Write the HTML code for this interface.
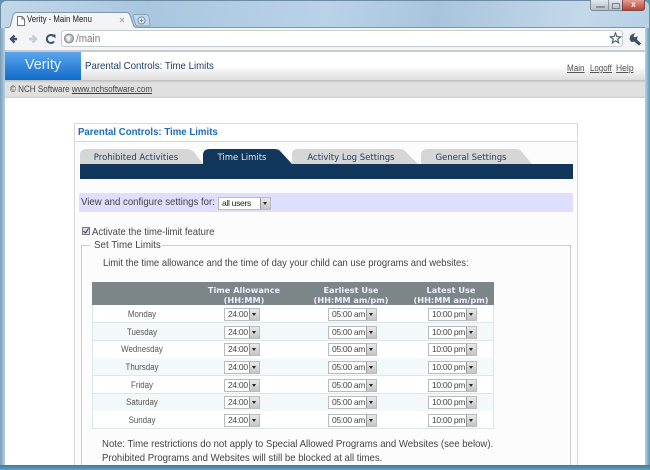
<!DOCTYPE html>
<html><head><meta charset="utf-8"><style>
html,body{margin:0;padding:0;width:650px;height:470px;overflow:hidden;background:#5f93b5}
*{box-sizing:border-box}
div,span,a{position:absolute;white-space:nowrap;font-family:"Liberation Sans",sans-serif}
.sel{height:13px;background:#fff;border:1px solid #bbb;font-size:8.5px;letter-spacing:-.3px;color:#444;line-height:11px;padding-left:3px}
.btn{position:absolute;top:0;right:0;width:10px;height:11px;background:linear-gradient(#e8e8e8,#c4c4c4);border-left:1px solid #999}
.btn:after{content:"";position:absolute;left:2px;top:4px;border:2px solid transparent;border-top:3px solid #222;border-bottom:0}
.a{width:36px;left:224px}.b{width:49px;left:328px}.c{width:49px;left:428px}
.day{left:92px;width:100px;text-align:center;font-size:9px;color:#555;line-height:13px;transform:scaleX(.88)}
.row{left:92px;width:402px;height:18px;border-bottom:1px solid #dce8e8;border-left:1px solid #dce8e8;border-right:1px solid #dce8e8}
.th{color:#eef;font:bold 8.2px "DejaVu Sans",sans-serif;text-align:center;line-height:10px}
.tab{top:149px;height:15px;font:8.5px "DejaVu Sans",sans-serif;color:#1e3f60;line-height:18px;text-align:center}
.x{transform-origin:0 50%}
</style></head><body>
<div style="left:0;top:0;width:650px;height:470px;background:linear-gradient(100deg,#c2d8e8 0%,#a9c6e0 20%,#bad2e8 45%,#a8c4dc 60%,#c4d8ea 80%,#a6c6de 100%);border:1px solid #6c8ca4;border-radius:6px 6px 0 0"></div>
<div style="left:0;top:28px;width:5px;height:442px;background:linear-gradient(90deg,#7a9cb8,#b4d0e4)"></div>
<div style="left:645px;top:28px;width:5px;height:442px;background:linear-gradient(270deg,#5e94b4,#b4d4e8)"></div>
<!-- window buttons -->
<div style="left:590px;top:0;width:33px;height:11px;background:linear-gradient(#e2e8ec,#b4bcc4);border:1px solid #7a8a96;border-top:0;border-radius:0 0 0 3px"></div>
<div style="left:596px;top:6px;width:9px;height:2px;background:#8a96a0"></div>
<div style="left:608px;top:0;width:1px;height:11px;background:#8a96a0"></div>
<div style="left:612px;top:3px;width:8px;height:6px;border:1px solid #78848e"></div>
<div style="left:622px;top:0;width:23px;height:11px;background:linear-gradient(#e0a090,#c04030);border:1px solid #7c4a44;border-top:0;border-radius:0 0 3px 0;color:#fff;font:bold 8px/9px 'Liberation Sans',sans-serif;text-align:center">x</div>
<!-- tab -->
<svg style="position:absolute;left:0;top:0" width="650" height="52"><path d="M5 28H8Q10 28 11 24L13 15Q14 12.500 17 12.500H126Q129 12.500 130 15L133 24Q134 28 137 28H645V52H5Z" fill="#f2f4f6"/><path d="M5 27.500H8Q10 27.500 11 24L13 15Q14 12.500 17 12.500H126Q129 12.500 130 15L133 24Q134 27.500 137 27.500H645" fill="none" stroke="#7c96ac"/><path d="M133 16Q133 14.500 135 14.500H146Q148 14.500 149 17L150 25Q150 26 149 26H138Q136 26 135.500 24Z" fill="#c0d6ea" stroke="#7c96ac" stroke-width=".7"/><circle cx="141.500" cy="20.500" r="3.500" fill="#f4f8fc" stroke="#6a8cb0"/><path d="M141.500 18.500v4M139.500 20.500h4" stroke="#6a8cb0"/>
<path d="M17.500 16.500h4.500l2.500 2.500v6.500h-7z" fill="#fff" stroke="#777"/><path d="M22 16.500v2.500h2.500" fill="none" stroke="#777"/>
<path d="M120 18l4 4M124 18l-4 4" stroke="#aaa" stroke-width="1.200"/>
<path d="M11 39h6M14.500 35.500L11 39l3.500 3.500" fill="none" stroke="#3c5270" stroke-width="2.400"/>
<path d="M29 39h7M32.500 35.500L36 39l-3.500 3.500" fill="none" stroke="#c4ccd4" stroke-width="2.400"/>
<path d="M54 36.500A4 4 0 1 0 54 41.500" fill="none" stroke="#3c5270" stroke-width="2"/><path d="M51.500 34.500h4v4z" fill="#3c5270"/>
<rect x="61.500" y="30.500" width="561" height="16" rx="3" fill="#fff" stroke="#c4ccd2"/>
<circle cx="69" cy="38.500" r="4.500" fill="#b4bcc4" stroke="#7c858e"/><path d="M66 37q3-3 5 0l-1 3-2 2z" fill="#eef1f3"/>
<path d="M615.500 33l1.400 3.600 3.800.2-3 2.400 1 3.700-3.200-2.100-3.200 2.100 1-3.700-3-2.400 3.800-.2z" fill="#fff" stroke="#4a5a68" stroke-width="1.100"/>
<path d="M631 35.500l3-1.500-1 2.500 1.500 1.500 2.500-1-.5 3 4 3.500-1.500 1.500-4.500-4-3 .5-1.500-2.500z" fill="#3c5068" stroke="#3c5068"/></svg>
<span class="x" style="left:27px;top:14px;font-size:9.500px;color:#222;line-height:12px;transform:scaleX(.82)">Verity - Main Menu</span>
<span class="x" style="left:76px;top:32px;font-size:11px;color:#777;line-height:14px;transform:scaleX(.9)">/main</span>
<!-- page -->
<div style="left:5px;top:52px;width:640px;height:413px;background:#fff"></div>
<div style="left:5px;top:50px;width:640px;height:2px;background:#c8ccd0"></div>
<div style="left:5px;top:52px;width:640px;height:28px;background:linear-gradient(#fff 50%,#dcdcdc)"></div>
<div style="left:5px;top:52px;width:76px;height:28px;background:linear-gradient(#5ca6ee,#0f6ac8);color:#e4f0fc;font-size:14.500px;line-height:27px;text-align:center">Verity</div>
<span class="x" style="left:85px;top:59px;font-size:10.500px;color:#1d3f66;line-height:14px;transform:scaleX(.92)">Parental Controls: Time Limits</span>
<a class="x" style="left:567px;top:62px;font-size:9px;color:#555;text-decoration:underline;line-height:12px;transform:scaleX(.9)">Main</a>
<a class="x" style="left:590px;top:62px;font-size:9px;color:#555;text-decoration:underline;line-height:12px;transform:scaleX(.88)">Logoff</a>
<a class="x" style="left:616px;top:62px;font-size:9px;color:#555;text-decoration:underline;line-height:12px;transform:scaleX(.95)">Help</a>
<div style="left:5px;top:80px;width:640px;height:18px;background:linear-gradient(#bbb,#e0e0e0 3px,#e0e0e0 16px,#ccc)"></div>
<span class="x" style="left:10px;top:83px;font-size:9px;color:#444;line-height:12px;transform:scaleX(.895)">© NCH Software <u>www.nchsoftware.com</u></span>
<!-- panel -->
<div style="left:74px;top:123px;width:504px;height:347px;background:#fcfcfc;border:1px solid #d8d8d8"></div>
<div style="left:75px;top:124px;width:502px;height:18px;background:#fff;border-bottom:1px solid #d8d8d8"></div>
<span class="x" style="left:78px;top:126px;font-size:10px;font-weight:bold;color:#1c6cb8;line-height:13px;transform:scaleX(.965)">Parental Controls: Time Limits</span>
<svg style="position:absolute;left:0;top:140px" width="650" height="30"><g fill="#d6d6d6"><path d="M80 24V15Q80 9 87 9H187Q191 9 194 12L203 24Z"/><path d="M292 24V15Q292 9 298 9H400Q404 9 406 12L418 24Z" /><path d="M421 24V15Q421 9 428 9H516Q520 9 522 12L532 24Z"/></g><path d="M203 24V15Q203 9 210 9H275Q279 9 281 12L292 24Z" fill="#12375c"/></svg>
<div class="tab" style="left:80px;width:112px">Prohibited Activities</div>
<div class="tab" style="left:203px;width:78px;color:#e0e8f0">Time Limits</div>
<div class="tab" style="left:295px;width:112px">Activity Log Settings</div>
<div class="tab" style="left:422px;width:98px">General Settings</div>
<div style="left:80px;top:164px;width:493px;height:15px;background:#12375c"></div>
<div style="left:79px;top:193px;width:494px;height:19px;background:#dedeff"></div>
<span class="x" style="left:81px;top:195px;font-size:10.500px;color:#444;line-height:14px;transform:scaleX(.915)">View and configure settings for:</span>
<div class="sel" style="left:218px;top:197px;width:53px;color:#222">all users<i class="btn"></i></div>
<div style="left:82px;top:227px;width:8px;height:8px;background:#dde;border:1px solid #778"></div>
<svg style="position:absolute;left:82px;top:227px" width="8" height="8"><path d="M1.500 4l2 2 3-4.500" fill="none" stroke="#333"/></svg>
<span class="x" style="left:92px;top:225px;font-size:10.500px;color:#444;line-height:14px;transform:scaleX(.904)">Activate the time-limit feature</span>
<div style="left:81px;top:245px;width:490px;height:225px;border:1px solid #ccc;border-bottom:0"></div>
<div style="left:90px;top:238px;width:72px;height:14px;background:#fcfcfc"></div>
<span class="x" style="left:94px;top:238px;font-size:10.500px;color:#444;line-height:14px;transform:scaleX(.93)">Set Time Limits</span>
<span class="x" style="left:103px;top:256px;font-size:10.500px;color:#444;line-height:14px;transform:scaleX(.9)">Limit the time allowance and the time of day your child can use programs and websites:</span>
<!-- table -->
<div style="left:92px;top:282px;width:402px;height:23px;background:#7a8688"></div>
<div class="th" style="left:190px;width:108px;top:285px">Time Allowance<br>(HH:MM)</div>
<div class="th" style="left:291px;width:120px;top:285px">Earliest Use<br>(HH:MM am/pm)</div>
<div class="th" style="left:391px;width:120px;top:285px">Latest Use<br>(HH:MM am/pm)</div>
<div class="row" style="top:305px;background:#fff"></div>
<div class="row" style="top:323px;background:#f3f9fa"></div>
<div class="row" style="top:341px;background:#fff"></div>
<div class="row" style="top:358px;background:#f3f9fa"></div>
<div class="row" style="top:376px;background:#fff"></div>
<div class="row" style="top:394px;background:#f3f9fa"></div>
<div class="row" style="top:411px;background:#fff"></div>
<div class="day" style="top:308px">Monday</div><div class="sel a" style="top:308px">24:00<i class="btn"></i></div><div class="sel b" style="top:308px">05:00 am<i class="btn"></i></div><div class="sel c" style="top:308px">10:00 pm<i class="btn"></i></div>
<div class="day" style="top:326px">Tuesday</div><div class="sel a" style="top:326px">24:00<i class="btn"></i></div><div class="sel b" style="top:326px">05:00 am<i class="btn"></i></div><div class="sel c" style="top:326px">10:00 pm<i class="btn"></i></div>
<div class="day" style="top:343px">Wednesday</div><div class="sel a" style="top:343px">24:00<i class="btn"></i></div><div class="sel b" style="top:343px">05:00 am<i class="btn"></i></div><div class="sel c" style="top:343px">10:00 pm<i class="btn"></i></div>
<div class="day" style="top:361px">Thursday</div><div class="sel a" style="top:361px">24:00<i class="btn"></i></div><div class="sel b" style="top:361px">05:00 am<i class="btn"></i></div><div class="sel c" style="top:361px">10:00 pm<i class="btn"></i></div>
<div class="day" style="top:379px">Friday</div><div class="sel a" style="top:379px">24:00<i class="btn"></i></div><div class="sel b" style="top:379px">05:00 am<i class="btn"></i></div><div class="sel c" style="top:379px">10:00 pm<i class="btn"></i></div>
<div class="day" style="top:396px">Saturday</div><div class="sel a" style="top:396px">24:00<i class="btn"></i></div><div class="sel b" style="top:396px">05:00 am<i class="btn"></i></div><div class="sel c" style="top:396px">10:00 pm<i class="btn"></i></div>
<div class="day" style="top:414px">Sunday</div><div class="sel a" style="top:414px">24:00<i class="btn"></i></div><div class="sel b" style="top:414px">05:00 am<i class="btn"></i></div><div class="sel c" style="top:414px">10:00 pm<i class="btn"></i></div>
<span class="x" style="left:102px;top:438px;font-size:10.300px;color:#444;line-height:14px;transform:scaleX(.933)">Note: Time restrictions do not apply to Special Allowed Programs and Websites (see below).</span>
<span class="x" style="left:102px;top:452px;font-size:10.300px;color:#444;line-height:14px;transform:scaleX(.93)">Prohibited Programs and Websites will still be blocked at all times.</span>
<div style="left:0;top:465px;width:650px;height:5px;background:linear-gradient(#3e7c9c,#5f9fbe)"></div>
</body></html>
